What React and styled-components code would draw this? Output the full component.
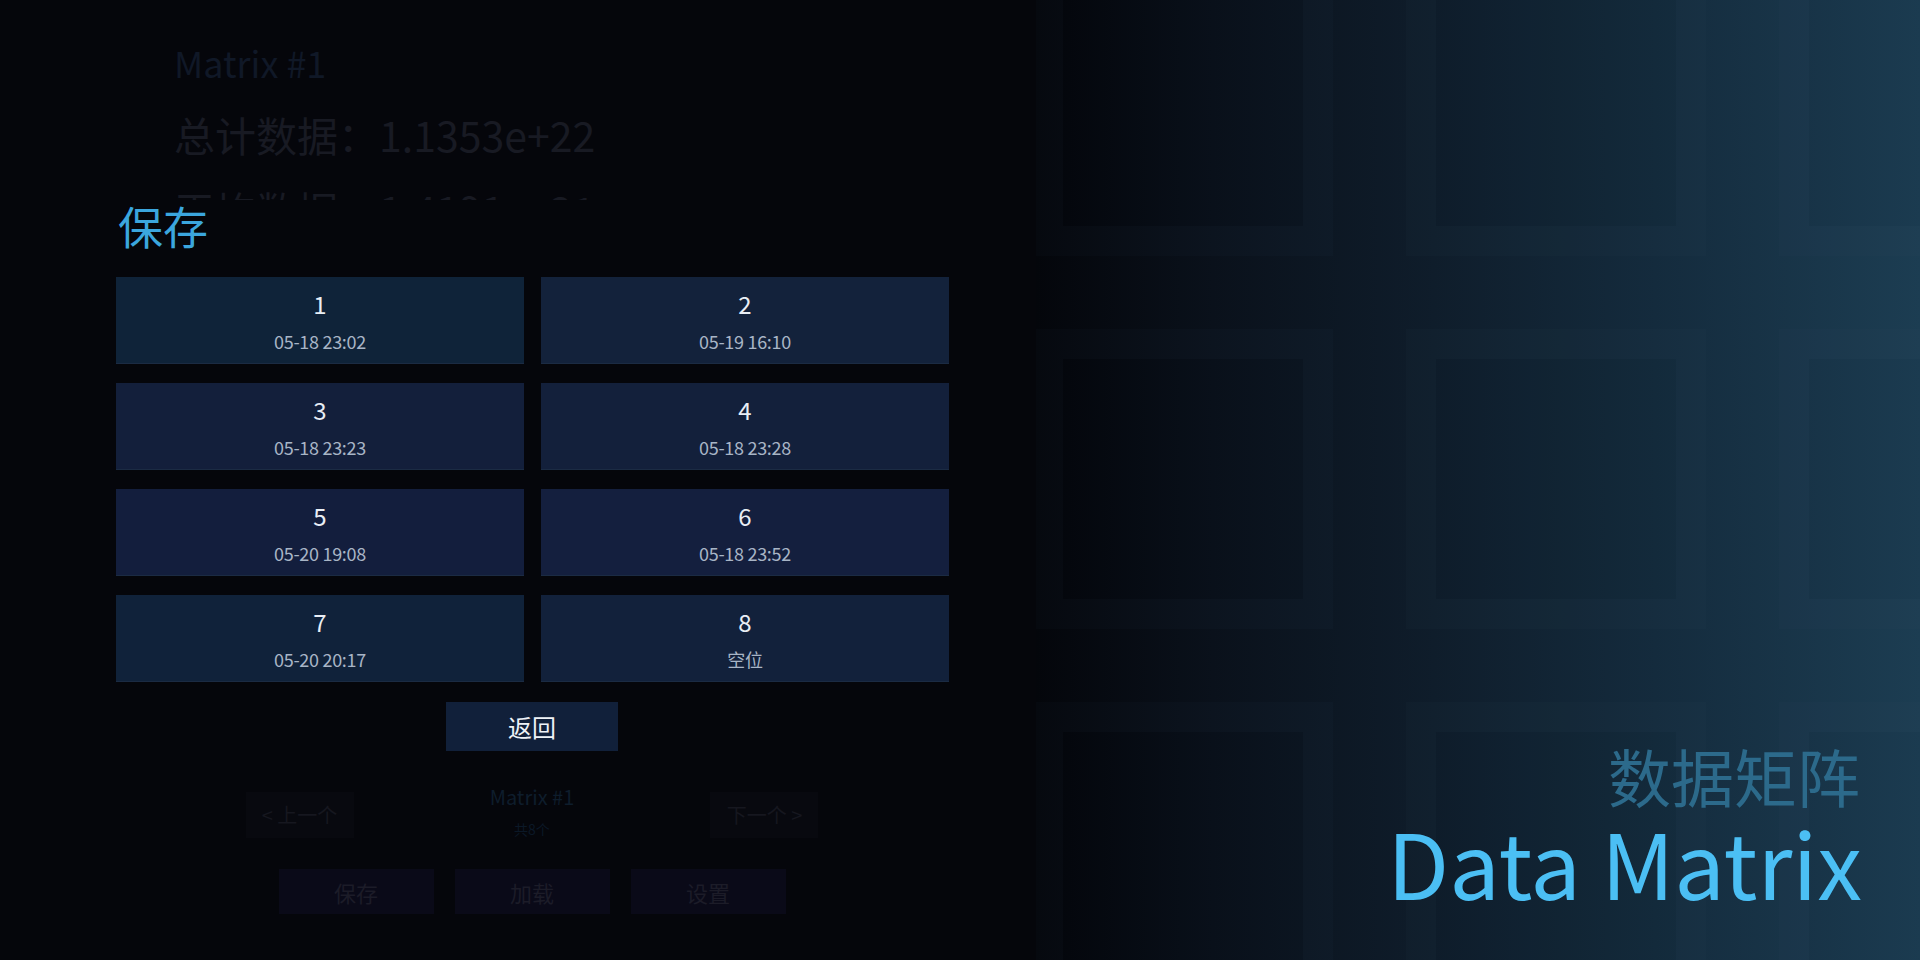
import styled, { createGlobalStyle } from "styled-components";

const GlobalStyle = createGlobalStyle`
  html, body {
    margin: 0;
    padding: 0;
    background: #05060b;
    overflow: hidden;
  }
  * {
    box-sizing: border-box;
  }
`;

const FONT = `"Noto Sans CJK SC", "Noto Sans", sans-serif`;

const slots = [
  { id: 1, time: "05-18 23:02", bg: "#0f2339" },
  { id: 2, time: "05-19 16:10", bg: "#13223b" },
  { id: 3, time: "05-18 23:23", bg: "#131f3b" },
  { id: 4, time: "05-18 23:28", bg: "#13203b" },
  { id: 5, time: "05-20 19:08", bg: "#131e3d" },
  { id: 6, time: "05-18 23:52", bg: "#141f3e" },
  { id: 7, time: "05-20 20:17", bg: "#10223a" },
  { id: 8, time: "空位", bg: "#12213b" },
];

const Page = styled.div`
  width: 1920px;
  height: 960px;
  display: flex;
  font-family: ${FONT};
`;

const LeftPanel = styled.div`
  width: 1036px;
  height: 100%;
  position: relative;
  background: #05060b;
  overflow: hidden;
`;

const AppScreen = styled.div`
  height: 100%;
  display: flex;
  flex-direction: column;
  padding: 44px 0 46px 0;
`;

const Header = styled.div`
  padding-left: 174px;
  display: flex;
  flex-direction: column;
`;

const DimTitle = styled.div`
  font-size: 36px;
  line-height: 1;
  color: #101827;
`;

const DimStat = styled.div`
  font-size: 41px;
  line-height: 1;
  color: #181a23;
  margin-top: ${(p) => p.$gap}px;
`;

const BottomArea = styled.div`
  margin-top: auto;
  padding-left: 28px;
  display: flex;
  flex-direction: column;
  align-items: center;
  gap: 30px;
`;

const NavRow = styled.div`
  width: 573px;
  display: flex;
  justify-content: space-between;
  align-items: center;
`;

const NavButton = styled.div`
  width: 108px;
  height: 46px;
  display: flex;
  align-items: center;
  justify-content: center;
  background: #08090f;
  color: #16171f;
  font-size: 20px;
`;

const NavInfo = styled.div`
  display: flex;
  flex-direction: column;
  align-items: center;
  gap: 8px;
  margin-top: -8px;
`;

const NavName = styled.div`
  font-size: 20px;
  color: #0e1d2c;
`;

const NavSub = styled.div`
  font-size: 14px;
  color: #0b1827;
`;

const ActionRow = styled.div`
  display: flex;
  gap: 21px;
`;

const ActionButton = styled.div`
  width: 155px;
  height: 45px;
  display: flex;
  align-items: center;
  justify-content: center;
  background: #0a0a18;
  color: #1c1c28;
  font-size: 22px;
`;

const Modal = styled.div`
  position: absolute;
  top: 200px;
  left: 96px;
  width: 872px;
  height: 575px;
  background: #05060b;
  padding: 3px 20px 0 20px;
  display: flex;
  flex-direction: column;
`;

const ModalTitle = styled.div`
  font-size: 45px;
  line-height: 1;
  color: #3ba6de;
  margin-left: 2px;
`;

const SlotGrid = styled.div`
  margin-top: 29px;
  display: grid;
  grid-template-columns: repeat(2, 408px);
  grid-auto-rows: 87px;
  column-gap: 17px;
  row-gap: 19px;
`;

const Slot = styled.div`
  background: ${(p) => p.$bg};
  border-bottom: 1px solid #1b2b43;
  display: flex;
  flex-direction: column;
  align-items: center;
  justify-content: center;
  gap: 16px;
  padding-top: 2px;
`;

const SlotNum = styled.div`
  font-size: 24px;
  line-height: 1;
  color: #e9eef5;
`;

const SlotTime = styled.div`
  font-size: 18px;
  line-height: 1;
  color: #a8b5c6;
  letter-spacing: -0.3px;
`;

const BackButton = styled.div`
  align-self: center;
  margin-top: 20px;
  width: 172px;
  height: 49px;
  background: #11203a;
  color: #eef2f7;
  font-size: 24px;
  display: flex;
  align-items: center;
  justify-content: center;
`;

const RightPanel = styled.div`
  flex: 1;
  position: relative;
  overflow: hidden;
  background: linear-gradient(
    90deg,
    #04060b 0%,
    #0a111b 20%,
    #0f1d2b 45%,
    #142b3d 70%,
    #1c3d52 100%
  );
  display: flex;
  flex-direction: column;
  justify-content: flex-end;
  align-items: flex-end;
  padding: 0 60px 54px 0;
`;

const TileLayer = styled.div`
  position: absolute;
  top: -44px;
  left: -3px;
  display: grid;
  grid-template-columns: repeat(3, 300px);
  grid-auto-rows: 300px;
  gap: 73px;
`;

const Tile = styled.div`
  border: 30px solid rgba(130, 185, 225, 0.026);
  background: rgba(0, 0, 0, 0.02);
`;

const Brand = styled.div`
  position: relative;
  display: flex;
  flex-direction: column;
  align-items: flex-end;
  gap: 10px;
`;

const BrandCn = styled.div`
  font-size: 63px;
  line-height: 1;
  color: #2c6a8b;
`;

const BrandEn = styled.div`
  font-size: 90px;
  line-height: 1;
  color: #4bbff4;
  margin-right: -2px;
`;

export default function App() {
  return (
    <>
      <GlobalStyle />
      <Page>
        <LeftPanel>
          <AppScreen>
            <Header>
              <DimTitle>Matrix #1</DimTitle>
              <DimStat $gap={34}>总计数据：1.1353e+22</DimStat>
              <DimStat $gap={34}>平均数据：1.4191e+21</DimStat>
            </Header>
            <BottomArea>
              <NavRow>
                <NavButton>&lt; 上一个</NavButton>
                <NavInfo>
                  <NavName>Matrix #1</NavName>
                  <NavSub>共8个</NavSub>
                </NavInfo>
                <NavButton>下一个 &gt;</NavButton>
              </NavRow>
              <ActionRow>
                <ActionButton>保存</ActionButton>
                <ActionButton>加载</ActionButton>
                <ActionButton>设置</ActionButton>
              </ActionRow>
            </BottomArea>
          </AppScreen>
          <Modal>
            <ModalTitle>保存</ModalTitle>
            <SlotGrid>
              {slots.map((s) => (
                <Slot key={s.id} $bg={s.bg}>
                  <SlotNum>{s.id}</SlotNum>
                  <SlotTime>{s.time}</SlotTime>
                </Slot>
              ))}
            </SlotGrid>
            <BackButton>返回</BackButton>
          </Modal>
        </LeftPanel>
        <RightPanel>
          <TileLayer>
            {Array.from({ length: 9 }).map((_, i) => (
              <Tile key={i} />
            ))}
          </TileLayer>
          <Brand>
            <BrandCn>数据矩阵</BrandCn>
            <BrandEn>Data Matrix</BrandEn>
          </Brand>
        </RightPanel>
      </Page>
    </>
  );
}
